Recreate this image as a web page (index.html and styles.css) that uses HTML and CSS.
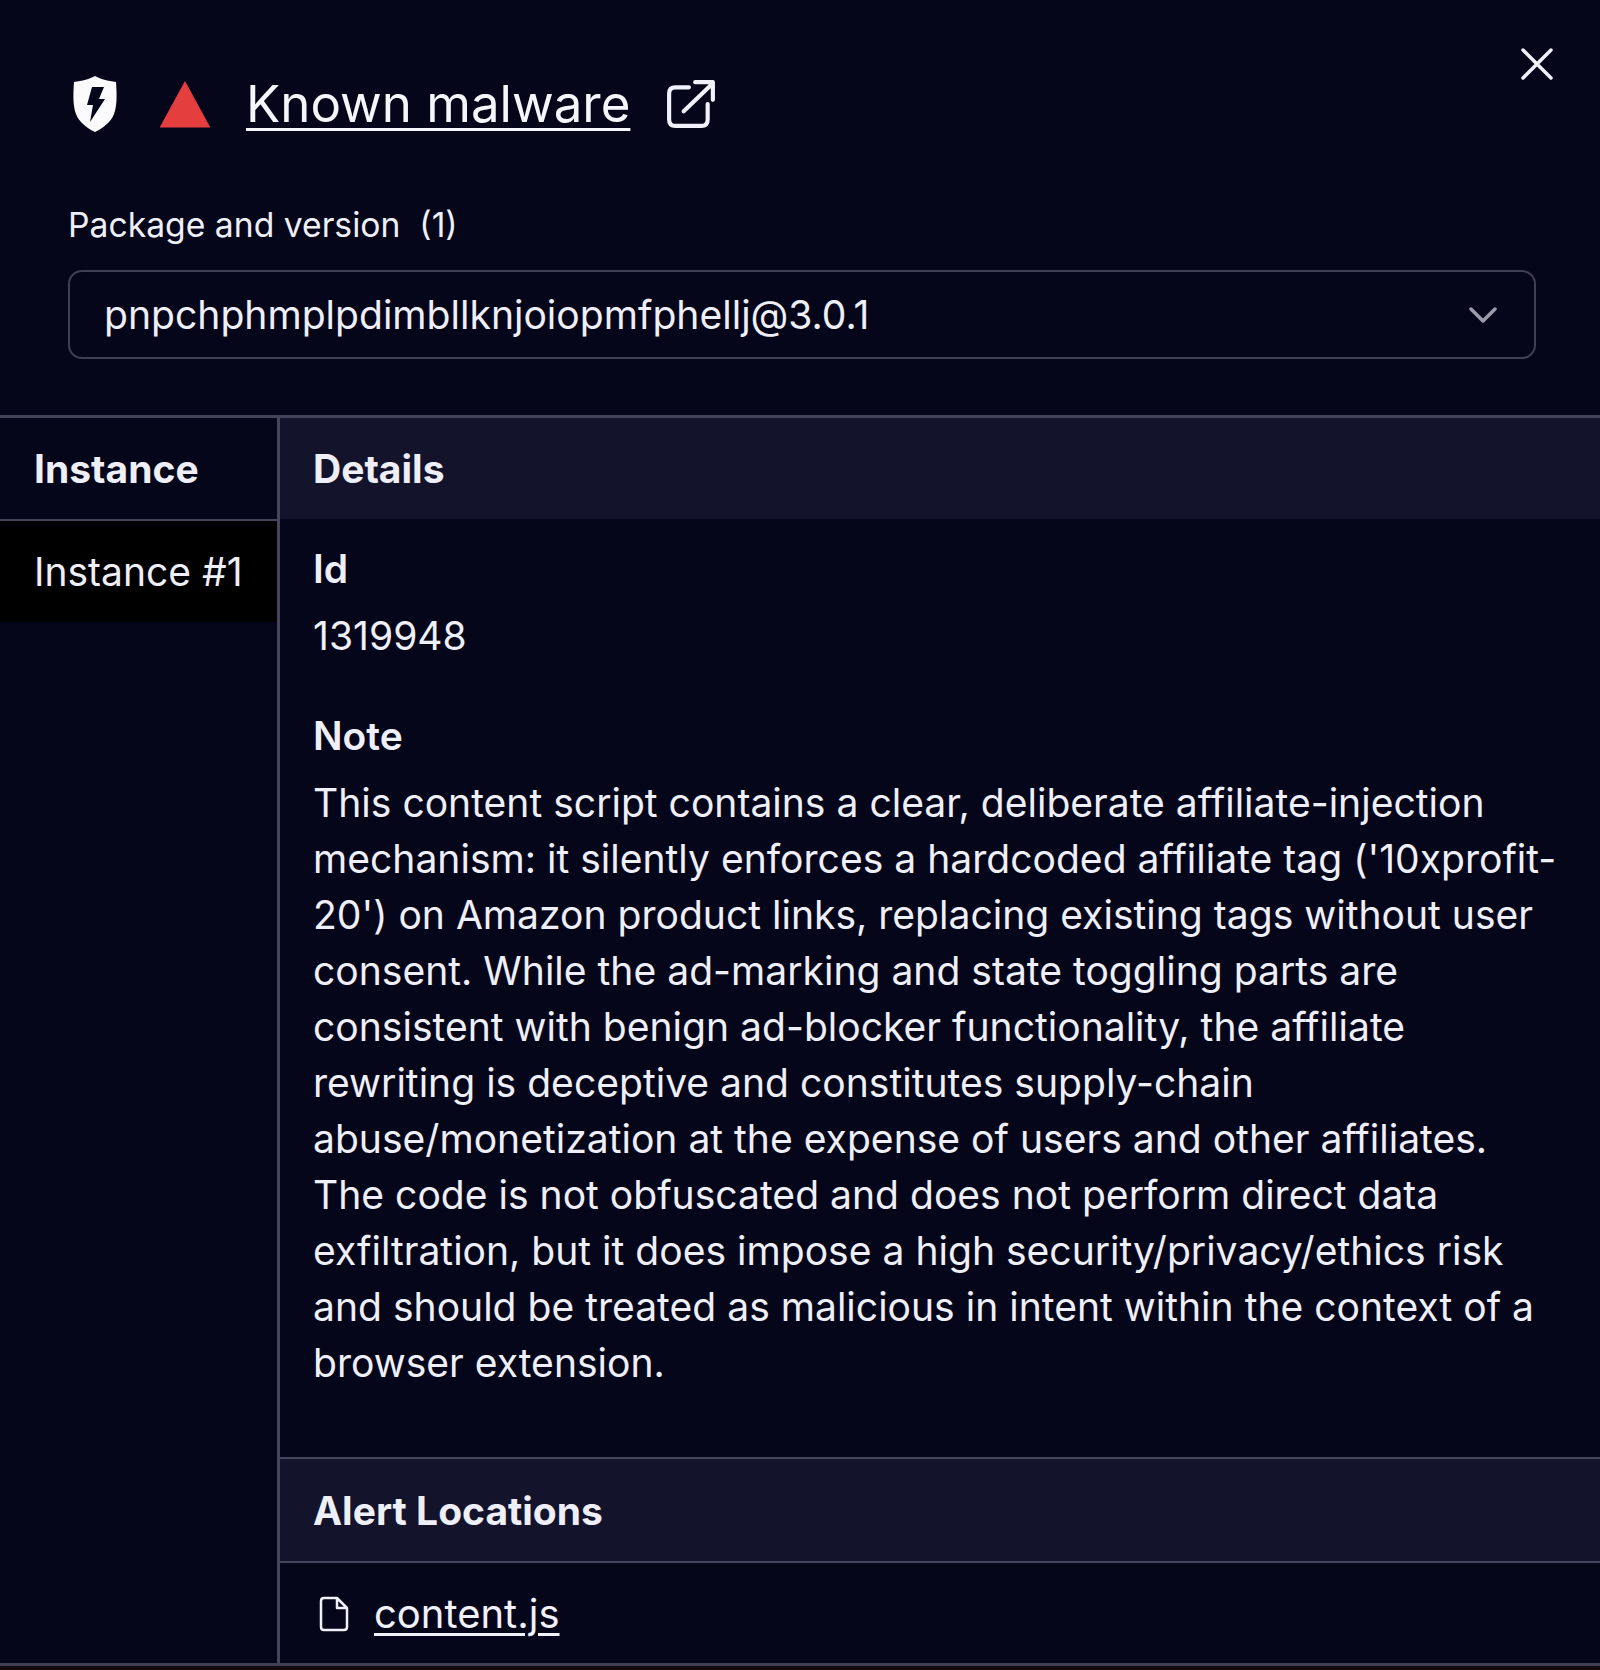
FILE: index.html
```html
<!DOCTYPE html>
<html>
<head>
    <title>Known malware</title>
    <link rel="stylesheet" href="styles.css">
</head>
<body>
    <div class="dialog">
        <button class="close-button">
            <svg width="34" height="34" viewBox="0 0 34 34"><path d="M3 3L31 31M31 3L3 31"/></svg>
        </button>
        <div class="top">
            <div class="title-row">
                <svg class="shield" width="44" height="56" viewBox="0 0 44 56">
                    <path class="shield-body" d="M22 0C27 3 35 5 43 6C44 20 44 30 41 38C38 46 30 52 22 56C14 52 6 46 3 38C0 30 0 20 1 6C9 5 17 3 22 0Z"/>
                    <path class="shield-bolt" d="M19 11H31L26 23H32L17 46L20 29H14Z"/>
                </svg>
                <svg class="triangle" width="52" height="47" viewBox="0 0 50 46"><path d="M25 1L49 45H1Z"/></svg>
                <a class="title-link" href="#">Known malware</a>
                <svg class="external" width="50" height="50" viewBox="0 0 48 48">
                    <path d="M22 8H9C5 8 3 10 3 14V39C3 43 5 45 9 45H34C38 45 40 43 40 39V24M17 31L45 4M28 3H45V20"/>
                </svg>
            </div>
            <div class="package-label">Package and version&nbsp; (1)</div>
            <div class="select-box">
                <span>pnpchphmplpdimbllknjoiopmfphellj@3.0.1</span>
                <svg width="28" height="16" viewBox="0 0 28 16"><path d="M2 2L14 14L26 2"/></svg>
            </div>
        </div>
        <div class="columns">
            <div class="instance-col">
                <div class="col-head">Instance</div>
                <div class="instance-row">Instance #1</div>
            </div>
            <div class="details-col">
                <div class="col-head shaded">Details</div>
                <div class="details-body">
                    <div class="field">
                        <div class="field-name">Id</div>
                        <div class="field-value">1319948</div>
                    </div>
                    <div class="field">
                        <div class="field-name">Note</div>
                        <div class="field-value">This content script contains a clear, deliberate affiliate-injection mechanism: it silently enforces a hardcoded affiliate tag ('10xprofit-20') on Amazon product links, replacing existing tags without user consent. While the ad-marking and state toggling parts are consistent with benign ad-blocker functionality, the affiliate rewriting is deceptive and constitutes supply-chain abuse/monetization at the expense of users and other affiliates. The code is not obfuscated and does not perform direct data exfiltration, but it does impose a high security/privacy/ethics risk and should be treated as malicious in intent within the context of a browser extension.</div>
                    </div>
                </div>
                <div class="col-head shaded boxed">Alert Locations</div>
                <div class="location-row">
                    <svg width="30" height="36" viewBox="0 0 30 36"><path d="M5 2H18L28 12V31C28 33 27 34 25 34H5C3 34 2 33 2 31V5C2 3 3 2 5 2ZM18 2V12H28"/></svg>
                    <a class="file-link" href="#">content.js</a>
                </div>
            </div>
        </div>
    </div>
</body>
</html>
```

FILE: styles.css
```css
body {
    margin: 0;
    background-color: #140a10;
    color: #eeeff9;
    font-family: Inter, "Liberation Sans", sans-serif;
}

.dialog {
    position: relative;
    height: 1666px;
    background-color: #05061a;
    overflow: hidden;
    display: flex;
    flex-direction: column;
}

.close-button {
    position: absolute;
    top: 47px;
    right: 46px;
    padding: 0;
    background: none;
    border: none;
    line-height: 0;
}

.close-button path {
    fill: none;
    stroke: #f0f1fa;
    stroke-width: 3.5;
    stroke-linecap: round;
}

.top {
    padding: 72px 64px 56px 68px;
}

.title-row {
    display: flex;
    align-items: center;
    height: 64px;
}

.shield {
    margin-left: 5px;
}

.shield-body {
    fill: #fbfbfe;
}

.shield-bolt {
    fill: #05061a;
}

.triangle {
    margin-left: 42px;
}

.triangle path {
    fill: #e53e3e;
    stroke: #e53e3e;
    stroke-linejoin: round;
}

.title-link {
    margin-left: 35px;
    color: #f5f6fc;
    font-size: 51px;
    line-height: 64px;
    text-decoration: underline;
    text-decoration-thickness: 3px;
    text-underline-offset: 6px;
}

.external {
    margin-left: 36px;
}

.external path {
    fill: none;
    stroke: #f0f1fa;
    stroke-width: 4;
    stroke-linecap: round;
    stroke-linejoin: round;
}

.package-label {
    margin-top: 65px;
    font-size: 33.7px;
    line-height: 48px;
}

.select-box {
    margin-top: 21px;
    height: 89px;
    box-sizing: border-box;
    padding: 0 37px 0 34px;
    border: 2px solid #3f4052;
    border-radius: 14px;
    font-size: 39.1px;
    display: flex;
    align-items: center;
    justify-content: space-between;
}

.select-box path {
    fill: none;
    stroke: #9c9dab;
    stroke-width: 3.5;
    stroke-linecap: round;
    stroke-linejoin: round;
}

.columns {
    flex: 1;
    display: flex;
    border-top: 3px solid #44455a;
    border-bottom: 3px solid #3f4052;
    min-height: 0;
}

.instance-col {
    width: 277px;
    flex-shrink: 0;
    border-right: 3px solid #44455a;
}

.col-head {
    height: 101px;
    box-sizing: border-box;
    padding: 0 33px;
    font-size: 39px;
    font-weight: 700;
    display: flex;
    align-items: center;
}

.instance-col .col-head {
    height: 103px;
    border-bottom: 2px solid #44455a;
    padding: 0 34px;
}

.shaded {
    background-color: #13132c;
}

.boxed {
    border-top: 2px solid #44455a;
    border-bottom: 2px solid #44455a;
    height: 106px;
}

.instance-row {
    height: 101px;
    box-sizing: border-box;
    padding: 0 34px;
    background-color: #000;
    font-size: 39px;
    display: flex;
    align-items: center;
}

.details-col {
    flex: 1;
    display: flex;
    flex-direction: column;
    min-width: 0;
}

.details-body {
    flex: 1;
    padding: 20px 40px 0 33px;
}

.field {
    margin-bottom: 42px;
}

.field-name {
    font-size: 39px;
    font-weight: 600;
    line-height: 60px;
}

.field-value {
    margin-top: 9px;
    font-size: 39.07px;
    line-height: 56px;
}

.location-row {
    height: 100px;
    box-sizing: border-box;
    padding: 1px 33px 0 39px;
    display: flex;
    align-items: center;
    gap: 25px;
}

.location-row path {
    fill: none;
    stroke: #f0f1fa;
    stroke-width: 2.5;
    stroke-linejoin: round;
}

.file-link {
    color: #f0f1fa;
    font-size: 40px;
    text-decoration: underline;
    text-decoration-thickness: 3px;
    text-underline-offset: 5px;
}
```
